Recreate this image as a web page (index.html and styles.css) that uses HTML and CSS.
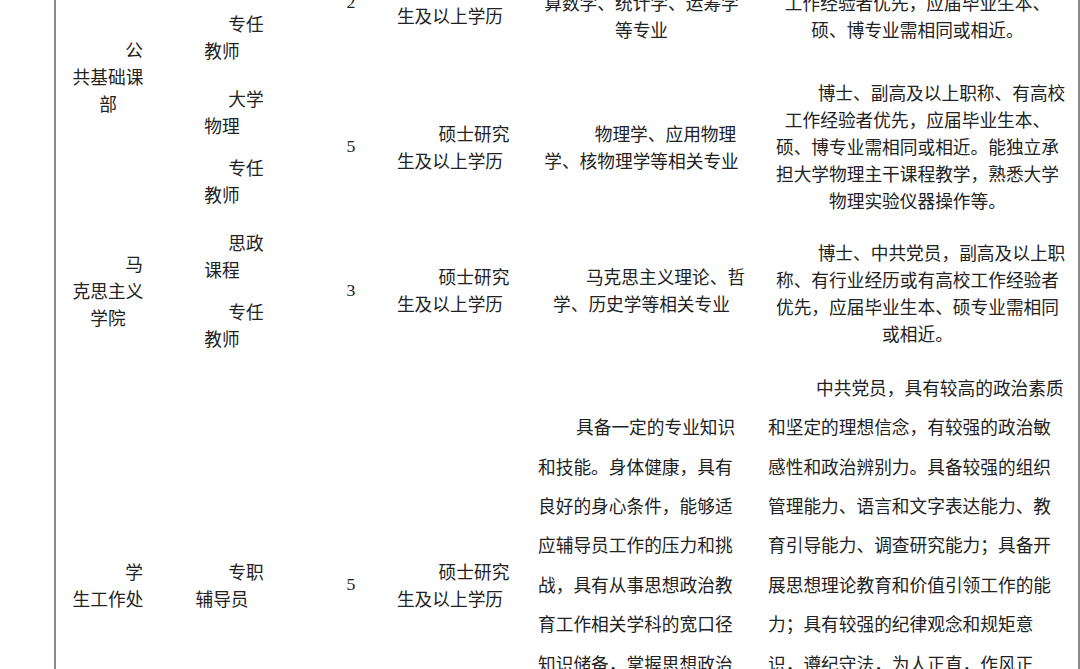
FILE: index.html
```html
<!DOCTYPE html>
<html lang="zh-CN">
<head>
<meta charset="utf-8">
<title>岗位表</title>
<link rel="stylesheet" href="styles.css">
</head>
<body>
<div class="table">
  <!-- row A + B -->
  <div class="cell c1 span2 nudge">
    <div class="ln first f26">公</div>
    <div class="ln">共基础课</div>
    <div class="ln">部</div>
  </div>
  <div class="cell c2">
    <div class="ln first">高等</div>
    <div class="ln">数学</div>
    <div class="ln first gap">专任</div>
    <div class="ln">教师</div>
  </div>
  <div class="cell c3"><div class="ln num">2</div></div>
  <div class="cell c4">
    <div class="ln first">硕士研究</div>
    <div class="ln">生及以上学历</div>
  </div>
  <div class="cell c5">
    <div class="ln first">数学、应用数学、计</div>
    <div class="ln">算数学、统计学、运筹学</div>
    <div class="ln">等专业</div>
  </div>
  <div class="cell c6">
    <div class="ln first">博士、副高及以上职称、有高校</div>
    <div class="ln">工作经验者优先，应届毕业生本、</div>
    <div class="ln">硕、博专业需相同或相近。</div>
  </div>

  <!-- row B -->
  <div class="cell c2">
    <div class="ln first">大学</div>
    <div class="ln">物理</div>
    <div class="ln first gap">专任</div>
    <div class="ln">教师</div>
  </div>
  <div class="cell c3"><div class="ln num">5</div></div>
  <div class="cell c4">
    <div class="ln first">硕士研究</div>
    <div class="ln">生及以上学历</div>
  </div>
  <div class="cell c5">
    <div class="ln first">物理学、应用物理</div>
    <div class="ln">学、核物理学等相关专业</div>
  </div>
  <div class="cell c6">
    <div class="ln first">博士、副高及以上职称、有高校</div>
    <div class="ln">工作经验者优先，应届毕业生本、</div>
    <div class="ln">硕、博专业需相同或相近。能独立承</div>
    <div class="ln">担大学物理主干课程教学，熟悉大学</div>
    <div class="ln">物理实验仪器操作等。</div>
  </div>

  <!-- row C -->
  <div class="cell c1">
    <div class="ln first f26">马</div>
    <div class="ln">克思主义</div>
    <div class="ln">学院</div>
  </div>
  <div class="cell c2">
    <div class="ln first">思政</div>
    <div class="ln">课程</div>
    <div class="ln first gap">专任</div>
    <div class="ln">教师</div>
  </div>
  <div class="cell c3"><div class="ln num">3</div></div>
  <div class="cell c4">
    <div class="ln first">硕士研究</div>
    <div class="ln">生及以上学历</div>
  </div>
  <div class="cell c5">
    <div class="ln first">马克思主义理论、哲</div>
    <div class="ln">学、历史学等相关专业</div>
  </div>
  <div class="cell c6 nudge">
    <div class="ln first">博士、中共党员，副高及以上职</div>
    <div class="ln">称、有行业经历或有高校工作经验者</div>
    <div class="ln">优先，应届毕业生本、硕专业需相同</div>
    <div class="ln">或相近。</div>
  </div>

  <!-- row D -->
  <div class="cell c1">
    <div class="ln first f26">学</div>
    <div class="ln">生工作处</div>
  </div>
  <div class="cell c2">
    <div class="ln first">专职</div>
    <div class="ln">辅导员</div>
  </div>
  <div class="cell c3"><div class="ln num">5</div></div>
  <div class="cell c4">
    <div class="ln first">硕士研究</div>
    <div class="ln">生及以上学历</div>
  </div>
  <div class="cell c5 prose prose5">
    <div class="ln lead">具备一定的专业知识</div>
    <div class="ln">和技能。身体健康，具有</div>
    <div class="ln">良好的身心条件，能够适</div>
    <div class="ln">应辅导员工作的压力和挑</div>
    <div class="ln">战，具有从事思想政治教</div>
    <div class="ln">育工作相关学科的宽口径</div>
    <div class="ln">知识储备，掌握思想政治</div>
    <div class="ln">教育相关理论和方法，具</div>
    <div class="ln">有一定的研究能力。</div>
  </div>
  <div class="cell c6 prose prose6">
    <div class="ln lead">中共党员，具有较高的政治素质</div>
    <div class="ln">和坚定的理想信念，有较强的政治敏</div>
    <div class="ln">感性和政治辨别力。具备较强的组织</div>
    <div class="ln">管理能力、语言和文字表达能力、教</div>
    <div class="ln">育引导能力、调查研究能力；具备开</div>
    <div class="ln">展思想理论教育和价值引领工作的能</div>
    <div class="ln">力；具有较强的纪律观念和规矩意</div>
    <div class="ln">识，遵纪守法，为人正直，作风正</div>
    <div class="ln">派，热爱学生工作，具有较强的事业心</div>
    <div class="ln">和责任感，能够吃苦耐劳，团结协作。</div>
    <div class="ln">应届毕业生专业不限。</div>
  </div>
</div>
</body>
</html>
```

FILE: styles.css
```css
html, body {
  margin: 0;
  padding: 0;
  background: #ffffff;
  overflow: hidden;
}

body {
  font-family: "Noto Sans CJK SC", "Noto Sans", sans-serif;
  font-size: 17.7px;
  color: #222222;
}

.table {
  display: grid;
  grid-template-columns: 109px 120px 107px 118px 252px 316px;
  grid-template-rows: 146px 143px 144px 445px;
  align-items: center;
  width: 1022px;
  margin: -71px 0 0 54px;
  border-left: 2px solid #8c8c8c;
  border-right: 2px solid #8c8c8c;
}

.cell {
  text-align: center;
}

.span2 {
  grid-row: span 2;
}

.nudge {
  padding-top: 6px;
}

.c1 { padding-right: 5px; }
.c2 { padding-right: 6px; }
.c3 { padding-left: 25px; }
.c4 { padding-right: 2px; }
.c5 { padding-left: 11px; }
.c6 { padding-right: 5px; }

.ln {
  line-height: 27px;
  white-space: nowrap;
}

.first {
  margin-left: 24px;
  margin-right: -24px;
}

.first.f26 {
  margin-left: 26px;
  margin-right: -26px;
}

.gap {
  margin-top: 15px;
}

.num {
  font-family: "Liberation Serif", "Times New Roman", serif;
  font-size: 17.7px;
}

.prose {
  text-align: left;
}

.prose .ln {
  line-height: 39.4px;
}

.prose5 {
  padding-left: 28px;
}

.prose5 .lead {
  padding-left: 38px;
}

.prose6 {
  padding-left: 6px;
  padding-right: 0;
}

.prose6 .lead {
  padding-left: 48px;
}
```
